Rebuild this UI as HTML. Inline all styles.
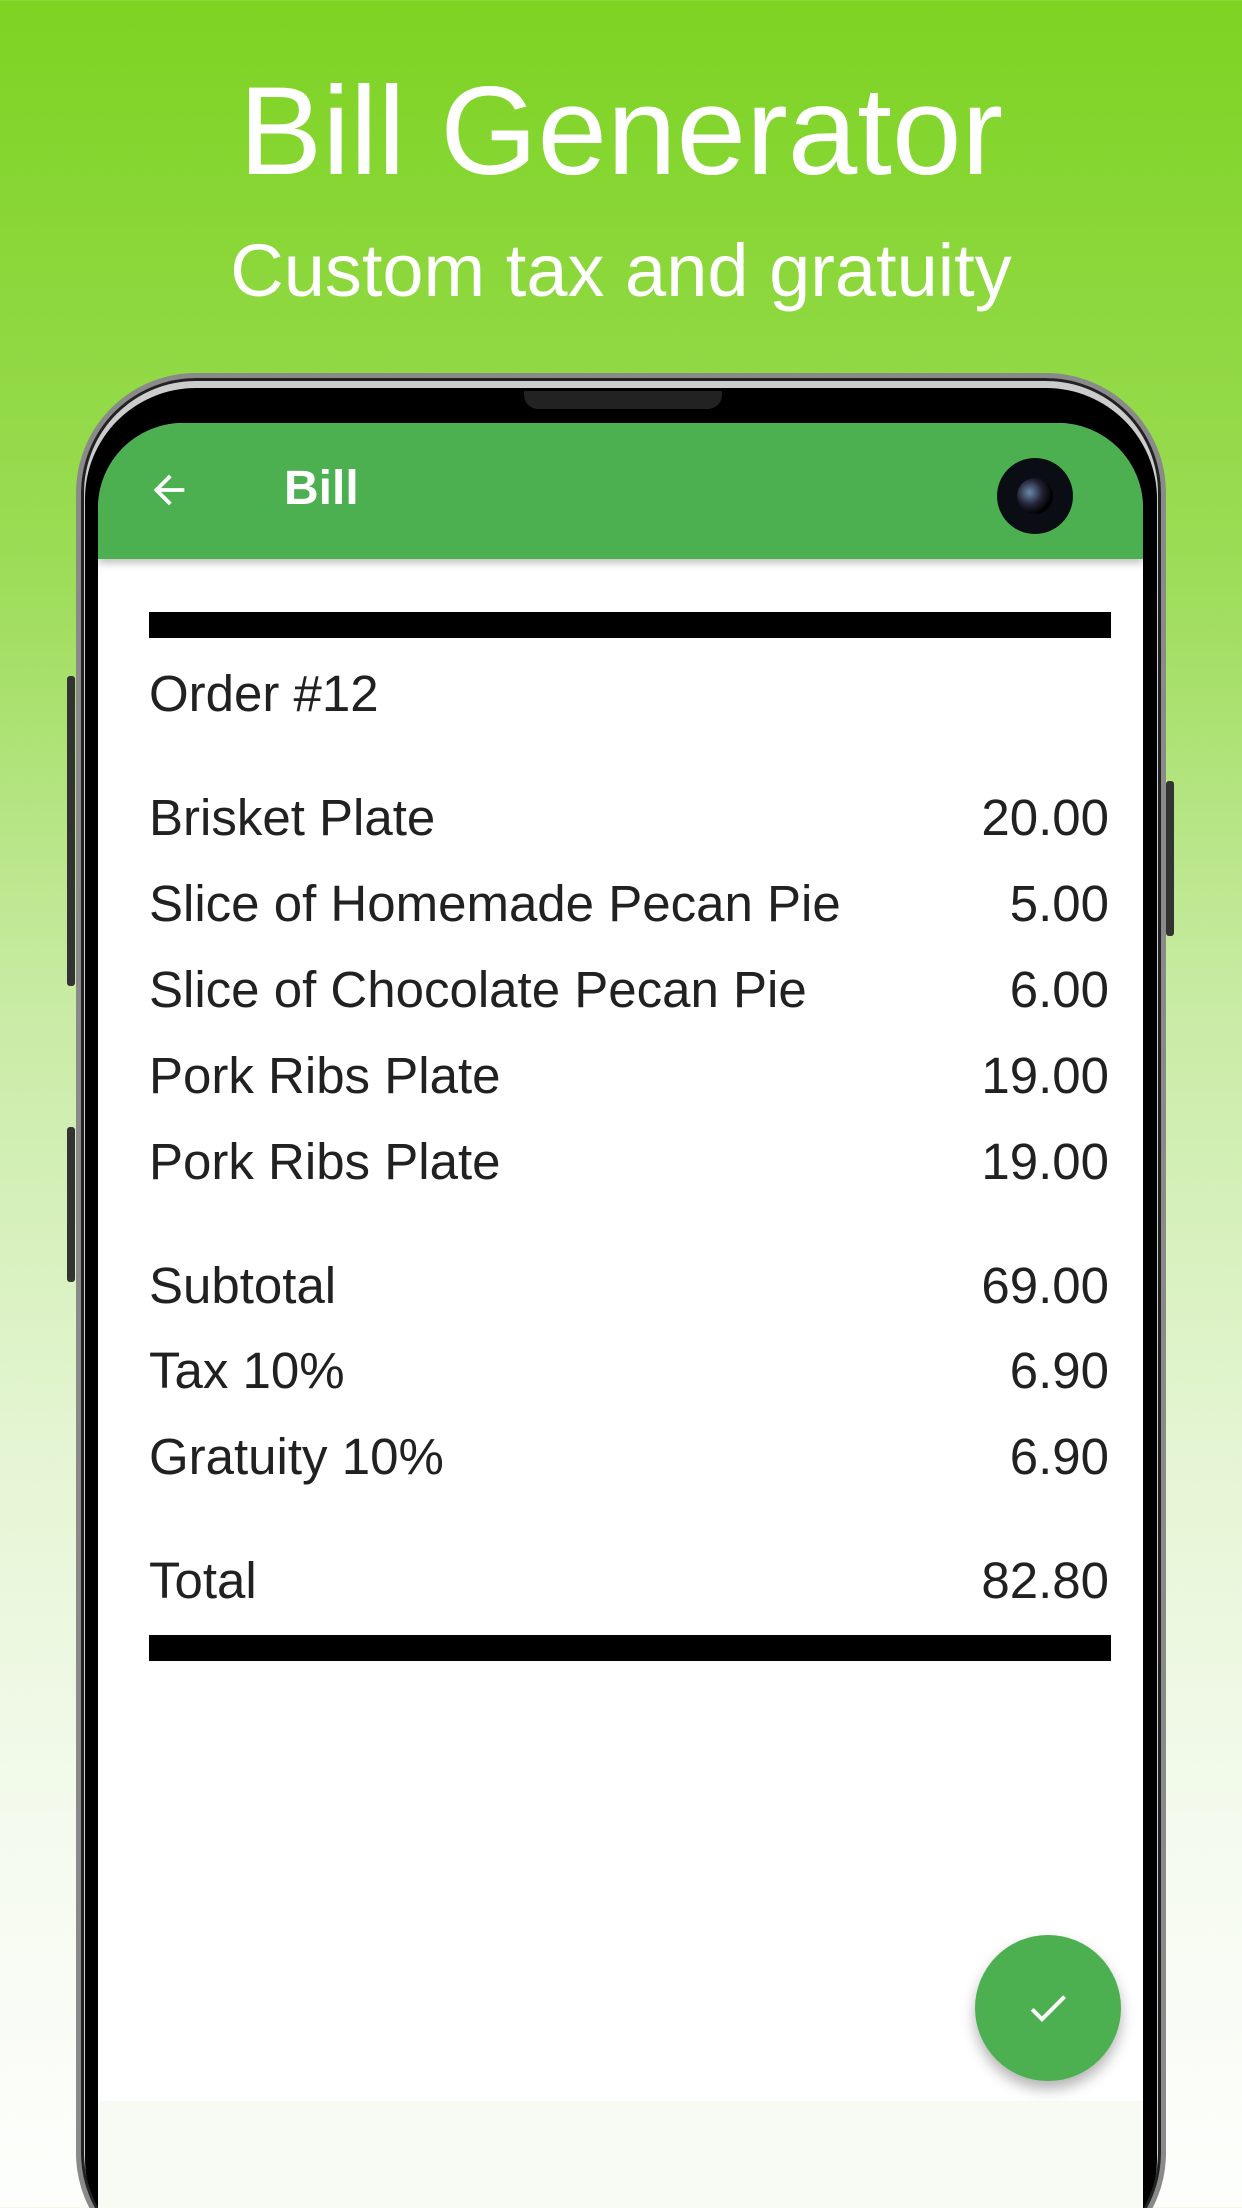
<!DOCTYPE html>
<html style="height:2208px;overflow:hidden"><head><meta charset="utf-8"><style>
*{margin:0;padding:0;box-sizing:border-box}
body{width:1242px;height:2208px;overflow:hidden;position:relative;font-family:"Liberation Sans",Roboto,sans-serif;
background:linear-gradient(#7dd322 0%,#9bdc55 25%,#c8eba3 45%,#e4f5d2 65%,#f6fbf1 85%,#fdfefc 100%)}
.h1{position:absolute;top:57px;width:100%;text-align:center;color:#fff;font-size:125px;line-height:150px}
.h2{position:absolute;top:226px;width:100%;text-align:center;color:#fff;font-size:74px;line-height:90px}
.phone{position:absolute;left:76px;top:373px;width:1090px;height:1900px;border-radius:120px;background:#000;
border:5px solid #8a8a8a;box-shadow:inset 0 0 0 3px #222, inset 0 6px 0 4px #ccc}
.btn{position:absolute;background:#333;border-radius:3px;width:8px}
.screen{position:absolute;left:98px;top:423px;width:1045px;height:1800px;background:#fff;border-radius:85px 85px 0 0;overflow:hidden}
.bar{height:136px;background:#4caf50;position:relative;box-shadow:0 4px 8px rgba(0,0,0,.25)}
.bill{position:absolute;left:186px;top:38px;color:#fff;font-weight:bold;font-size:48px}
.cam{position:absolute;left:899px;top:35px;width:76px;height:76px;border-radius:50%;background:#0a0d14}
.cam:after{content:"";position:absolute;left:20px;top:20px;width:36px;height:36px;border-radius:50%;background:radial-gradient(circle at 35% 40%,#6a88aa 0,#223 40%,#000 70%)}
.rule{position:absolute;left:51px;width:962px;height:26px;background:#000}
.row{position:absolute;left:51px;width:960px;font-size:51px;color:#212121;display:flex;justify-content:space-between;line-height:60px}
.fab{position:absolute;left:975px;top:1935px;width:146px;height:146px;border-radius:50%;background:#4caf50;box-shadow:0 8px 14px rgba(0,0,0,.3)}
.foot{position:absolute;left:0;top:1678px;width:100%;height:200px;background:#f8fbf4}
</style></head><body>
<div class="h1">Bill Generator</div>
<div class="h2">Custom tax and gratuity</div>
<div class="btn" style="left:67px;top:676px;height:310px"></div>
<div class="btn" style="left:67px;top:1127px;height:155px"></div>
<div class="btn" style="left:1166px;top:781px;height:155px"></div>
<div class="phone"></div>
<div style="position:absolute;left:524px;top:391px;width:198px;height:18px;background:#222;border-radius:0 0 14px 14px"></div>
<div class="screen">
 <div class="bar">
  <svg style="position:absolute;left:48px;top:44px" width="46" height="46" viewBox="0 0 24 24"><path d="M20 11H7.8l5.6-5.6L12 4l-8 8 8 8 1.4-1.4L7.8 13H20z" fill="#fff"/></svg>
  <div class="bill">Bill</div>
  <div class="cam"></div>
 </div>
 <div class="rule" style="top:189px"></div>
 <div class="row" style="top:241px">Order #12</div>
 <div class="row" style="top:365px"><span>Brisket Plate</span><span>20.00</span></div>
 <div class="row" style="top:451px"><span>Slice of Homemade Pecan Pie</span><span>5.00</span></div>
 <div class="row" style="top:537px"><span>Slice of Chocolate Pecan Pie</span><span>6.00</span></div>
 <div class="row" style="top:623px"><span>Pork Ribs Plate</span><span>19.00</span></div>
 <div class="row" style="top:709px"><span>Pork Ribs Plate</span><span>19.00</span></div>
 <div class="row" style="top:833px"><span>Subtotal</span><span>69.00</span></div>
 <div class="row" style="top:918px"><span>Tax 10%</span><span>6.90</span></div>
 <div class="row" style="top:1004px"><span>Gratuity 10%</span><span>6.90</span></div>
 <div class="row" style="top:1128px"><span>Total</span><span>82.80</span></div>
 <div class="rule" style="top:1212px"></div>
 <div class="foot"></div>
</div>
<div class="fab"><svg style="position:absolute;left:49px;top:49px" width="48" height="48" viewBox="0 0 24 24"><path d="M9 16.2L4.8 12l-1.4 1.4L9 19 21 7l-1.4-1.4z" fill="#fff"/></svg></div>
</body></html>
